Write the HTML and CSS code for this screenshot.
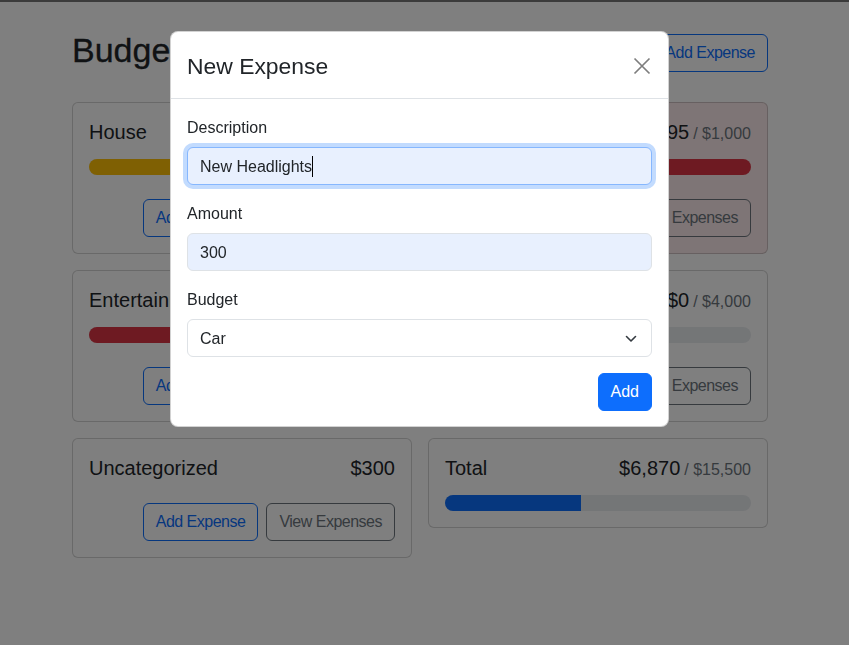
FILE: index.html
```html
<!DOCTYPE html>
<html lang="en">
<head>
<meta charset="utf-8">
<title>Budgets</title>
<link rel="stylesheet" href="styles.css">
</head>
<body>
<div class="container">
  <div class="page-head">
    <h1 class="page-title">Budgets</h1>
    <button class="btn btn-primary btn-tight">Add Budget</button>
    <button class="btn btn-outline-primary btn-tight">Add Expense</button>
  </div>

  <div class="card-grid">
    <div class="card">
      <div class="card-title"><span>House</span><span class="amount">$5,000<span class="max">/ $10,000</span></span></div>
      <div class="progress"><div class="bar bar-warning" style="width:50%"></div></div>
      <div class="actions">
        <button class="btn btn-outline-primary btn-tight">Add Expense</button>
        <button class="btn btn-outline-secondary btn-tight">View Expenses</button>
      </div>
    </div>

    <div class="card card-danger">
      <div class="card-title"><span>Car</span><span class="amount">$1,095<span class="max">/ $1,000</span></span></div>
      <div class="progress"><div class="bar bar-danger" style="width:100%"></div></div>
      <div class="actions">
        <button class="btn btn-outline-primary btn-tight">Add Expense</button>
        <button class="btn btn-outline-secondary btn-tight">View Expenses</button>
      </div>
    </div>

    <div class="card">
      <div class="card-title"><span>Entertainment</span><span class="amount">$475<span class="max">/ $500</span></span></div>
      <div class="progress"><div class="bar bar-danger" style="width:95%"></div></div>
      <div class="actions">
        <button class="btn btn-outline-primary btn-tight">Add Expense</button>
        <button class="btn btn-outline-secondary btn-tight">View Expenses</button>
      </div>
    </div>

    <div class="card">
      <div class="card-title"><span>Vacation</span><span class="amount">$0<span class="max">/ $4,000</span></span></div>
      <div class="progress"><div class="bar bar-primary" style="width:0%"></div></div>
      <div class="actions">
        <button class="btn btn-outline-primary btn-tight">Add Expense</button>
        <button class="btn btn-outline-secondary btn-tight">View Expenses</button>
      </div>
    </div>

    <div class="card">
      <div class="card-title"><span>Uncategorized</span><span class="amount">$300</span></div>
      <div class="actions">
        <button class="btn btn-outline-primary btn-tight">Add Expense</button>
        <button class="btn btn-outline-secondary btn-tight">View Expenses</button>
      </div>
    </div>

    <div class="card">
      <div class="card-title"><span>Total</span><span class="amount">$6,870<span class="max">/ $15,500</span></span></div>
      <div class="progress"><div class="bar bar-primary" style="width:44.3%"></div></div>
    </div>
  </div>
</div>

<div class="backdrop"></div>

<div class="modal">
  <div class="modal-header">
    <div class="modal-title">New Expense</div>
    <button class="btn-close" aria-label="Close">
      <svg width="18" height="18" viewBox="0 0 18 18"><path d="M1.5 1.5 16.5 16.5M16.5 1.5 1.5 16.5" stroke="#000" stroke-width="1.7" fill="none"/></svg>
    </button>
  </div>
  <div class="modal-body">
    <div class="field">
      <label class="form-label">Description</label>
      <div class="form-control is-focused autofilled">New Headlights<span class="caret"></span></div>
    </div>
    <div class="field">
      <label class="form-label">Amount</label>
      <div class="form-control autofilled">300</div>
    </div>
    <div class="field">
      <label class="form-label">Budget</label>
      <div class="form-control form-select">
        <span>Car</span>
        <svg class="chevron" width="16" height="12" viewBox="0 0 16 12"><path d="m3.5 3.5 4.5 4.5 4.5-4.5" stroke="#343a40" stroke-width="1.6" fill="none" stroke-linecap="round" stroke-linejoin="round"/></svg>
      </div>
    </div>
    <div class="submit-row">
      <button class="btn btn-primary">Add</button>
    </div>
  </div>
</div>
</body>
</html>
```

FILE: styles.css
```css
* { box-sizing: border-box; }

html, body {
  margin: 0;
  padding: 0;
}

body {
  background: #fff;
  border-top: 2px solid #777;
  font-family: "Liberation Sans", Arial, sans-serif;
  font-size: 16px;
  line-height: 1.5;
  color: #212529;
  height: 645px;
  overflow: hidden;
}

.container {
  width: 696px;
  margin-left: 72px;
  padding-top: 26px;
}

.page-head {
  display: flex;
  align-items: center;
  gap: 8px;
  margin-bottom: 24px;
}

.page-title {
  margin: 2px auto 7px 0;
  font-size: 34px;
  line-height: 1.2;
  font-weight: 500;
  -webkit-text-stroke: 0.3px #212529;
}

.btn {
  font-family: inherit;
  font-size: 16px;
  line-height: 1.5;
  padding: 6px 12px;
  border: 1px solid transparent;
  border-radius: 6px;
  background: transparent;
  cursor: pointer;
  white-space: nowrap;
}

.btn-tight {
  letter-spacing: -0.5px;
}

.btn-primary {
  background: #0d6efd;
  border-color: #0d6efd;
  color: #fff;
}

.btn-outline-primary {
  color: #0d6efd;
  border-color: #0d6efd;
}

.btn-outline-secondary {
  color: #6c757d;
  border-color: #6c757d;
}

.card-grid {
  display: grid;
  grid-template-columns: 1fr 1fr;
  gap: 16px;
  align-items: start;
}

.card {
  border: 1px solid rgba(0, 0, 0, 0.175);
  border-radius: 6px;
  padding: 16px;
  background: #fff;
}

.card-danger {
  background: #fcebec;
}

.card-title {
  display: flex;
  justify-content: space-between;
  align-items: baseline;
  height: 24px;
  font-size: 20px;
  line-height: 1.2;
  margin-bottom: 16px;
  padding-top: 1px;
}

.max {
  font-size: 16px;
  line-height: 1;
  color: #6c757d;
  margin-left: 4px;
}

.progress {
  height: 16px;
  border-radius: 50rem;
  background: #e9ecef;
  overflow: hidden;
  display: flex;
}

.bar { height: 100%; }
.bar-primary { background: #0d6efd; }
.bar-warning { background: #ffc107; }
.bar-danger { background: #dc3545; }

.actions {
  display: flex;
  justify-content: flex-end;
  gap: 8px;
  margin-top: 24px;
}

.backdrop {
  position: fixed;
  inset: 0;
  background: rgba(0, 0, 0, 0.5);
}

.modal {
  position: fixed;
  left: 170px;
  top: 31px;
  width: 499px;
  background: #fff;
  border: 1px solid rgba(0, 0, 0, 0.175);
  border-radius: 8px;
}

.modal-header {
  display: flex;
  align-items: center;
  justify-content: space-between;
  padding: 17px 16px 15px;
  border-bottom: 1px solid #dee2e6;
}

.modal-title {
  font-size: 22.9px;
  line-height: 1.5;
  font-weight: 500;
}

.btn-close {
  width: 24px;
  height: 24px;
  padding: 0;
  margin-right: -2px;
  border: 0;
  background: transparent;
  opacity: 0.5;
  display: flex;
  align-items: center;
  justify-content: center;
}

.modal-body {
  padding: 16px 16px 15px;
}

.field {
  margin-bottom: 16px;
}

.form-label {
  display: block;
  margin-bottom: 8px;
  padding-top: 1px;
  line-height: 23px;
}

.form-control {
  display: block;
  width: 100%;
  height: 38px;
  padding: 7px 12px 5px;
  border: 1px solid #dee2e6;
  border-radius: 6px;
  background: #fff;
  color: #212529;
}

.autofilled {
  background: #e8f0fe;
}

.is-focused {
  border-color: #86b7fe;
  box-shadow: 0 0 0 4px rgba(13, 110, 253, 0.25);
}

.caret {
  display: inline-block;
  width: 1px;
  height: 21px;
  background: #000;
  vertical-align: -5px;
}

.form-select {
  display: flex;
  align-items: center;
  justify-content: space-between;
  padding-right: 12px;
}

.submit-row {
  display: flex;
  justify-content: flex-end;
}
```
